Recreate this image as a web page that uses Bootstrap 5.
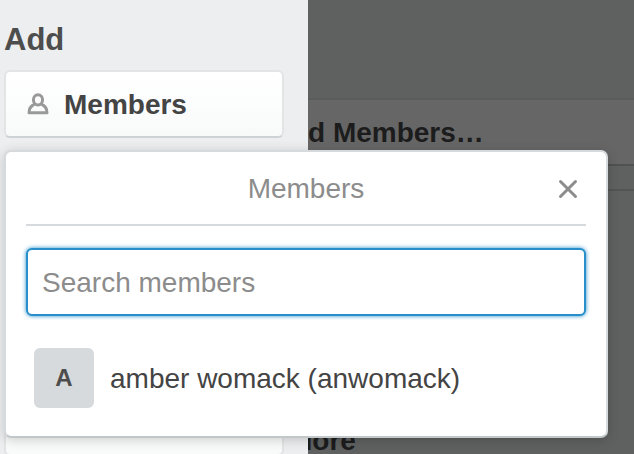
<!DOCTYPE html>
<html lang="en">
<head>
<meta charset="utf-8">
<meta name="viewport" content="width=device-width, initial-scale=1">
<title>Add members</title>
<link href="https://cdn.jsdelivr.net/npm/bootstrap@5.3.0/dist/css/bootstrap.min.css" rel="stylesheet">
<style>
body { font-family: "Liberation Sans", Arial, sans-serif; font-size: 28px; line-height: 32px; color: #444; }
.sidebar { flex: 0 0 308px; background: #edeef0; padding: 24px 24px 0 4px; }
.sidebar-title { font-size: 31px; line-height: 32px; color: #4d4d4d; margin-bottom: 14px; }
.side-btn { border: 2px solid #e2e4e6; border-bottom-color: #cdd2d4; border-radius: 6px; background: linear-gradient(#fff, #f8faf9); padding: 17px 20px 15px; color: #444; font-size: 28px; line-height: 32px; font-weight: 700; gap: 14px; min-height: 68px; }
.side-btn:hover { border-color: #cdd2d4; }
.later-btn { margin-top: 250px; background: #f9fbfa; border-color: #e2e4e6; }
.dimmed { background: #5e6160; color: #1c1c1c; font-weight: 700; min-width: 0; }
.dim-space { height: 98px; }
.dim-row { background: #666; border-top: 2px solid #5a5b5b; border-bottom: 2px solid #505151; padding: 17px 0 15px; }
.dim-band { height: 25px; border-bottom: 2px solid #525554; }
.dim-more { margin: 234px 0 0 -19px; }
.pop-panel { top: 150px; left: 4px; right: 26px; background: #fff; border: 2px solid #d6dadc; border-bottom-color: #c2c8ca; border-radius: 7px; padding: 0 20px 20px; box-shadow: 0 2px 12px rgba(0, 0, 0, .18); }
.pop-head { border-bottom: 2px solid #d6dadc; height: 74px; margin-bottom: 22px; padding-top: 2px; }
.pop-title { font-size: 28px; line-height: 32px; color: #8c8c8c; font-weight: 400; }
.pop-close { right: 0; padding: 8px; line-height: 0; color: #8c8c8c; }
.search-box, .search-box:focus { height: 68px; border: 2px solid #298fca; border-radius: 6px; padding: 2px 14px 0; font-size: 28px; line-height: 32px; box-shadow: 0 0 4px #298fca; }
.search-box::placeholder { color: #8c8c8c; opacity: 1; }
.member-row { margin-top: 24px; padding: 8px; gap: 16px; color: #444; }
.member-name { padding-top: 2px; }
.member-initial { flex: 0 0 60px; height: 60px; border-radius: 6px; background: #d6dadc; color: #4d4d4d; font-size: 24px; font-weight: 700; }
</style>
</head>
<body>
<div class="d-flex vh-100 overflow-hidden position-relative">
  <aside class="sidebar">
    <h2 class="sidebar-title fw-bold">Add</h2>
    <button type="button" class="side-btn d-flex align-items-center w-100">
      <svg width="24" height="24" viewBox="0 0 24 24" fill="none" stroke="#999" stroke-width="3" stroke-linejoin="round" aria-hidden="true">
        <ellipse cx="12" cy="6.8" rx="4.6" ry="5.1"/>
        <path d="M8.4 11.3C5 12.7 3 15.4 3 19.7h18C21 15.4 19 12.7 15.6 11.3"/>
      </svg>
      Members
    </button>
    <button type="button" class="side-btn later-btn w-100" aria-label="More actions"></button>
  </aside>
  <main class="dimmed flex-grow-1 overflow-hidden">
    <div class="dim-space"></div>
    <div class="dim-row">d Members…</div>
    <div class="dim-band"></div>
    <div class="dim-more">More</div>
  </main>
  <section class="pop-panel position-absolute" role="dialog" aria-labelledby="popTitle">
    <header class="pop-head d-flex align-items-center justify-content-center position-relative">
      <h3 class="pop-title m-0" id="popTitle">Members</h3>
      <button type="button" class="pop-close btn border-0 position-absolute" aria-label="Close">
        <svg width="20" height="20" viewBox="0 0 20 20" stroke="#8c8c8c" stroke-width="3" stroke-linecap="round" aria-hidden="true"><path d="M2.5 2.5l15 15M17.5 2.5l-15 15"/></svg>
      </button>
    </header>
    <input type="text" class="form-control search-box" placeholder="Search members" aria-label="Search members">
    <a href="#" class="member-row d-flex align-items-center text-decoration-none">
      <span class="member-initial d-flex align-items-center justify-content-center">A</span>
      <span class="member-name">amber womack (anwomack)</span>
    </a>
  </section>
</div>
<script src="https://cdn.jsdelivr.net/npm/bootstrap@5.3.0/dist/js/bootstrap.bundle.min.js"></script>
</body>
</html>
